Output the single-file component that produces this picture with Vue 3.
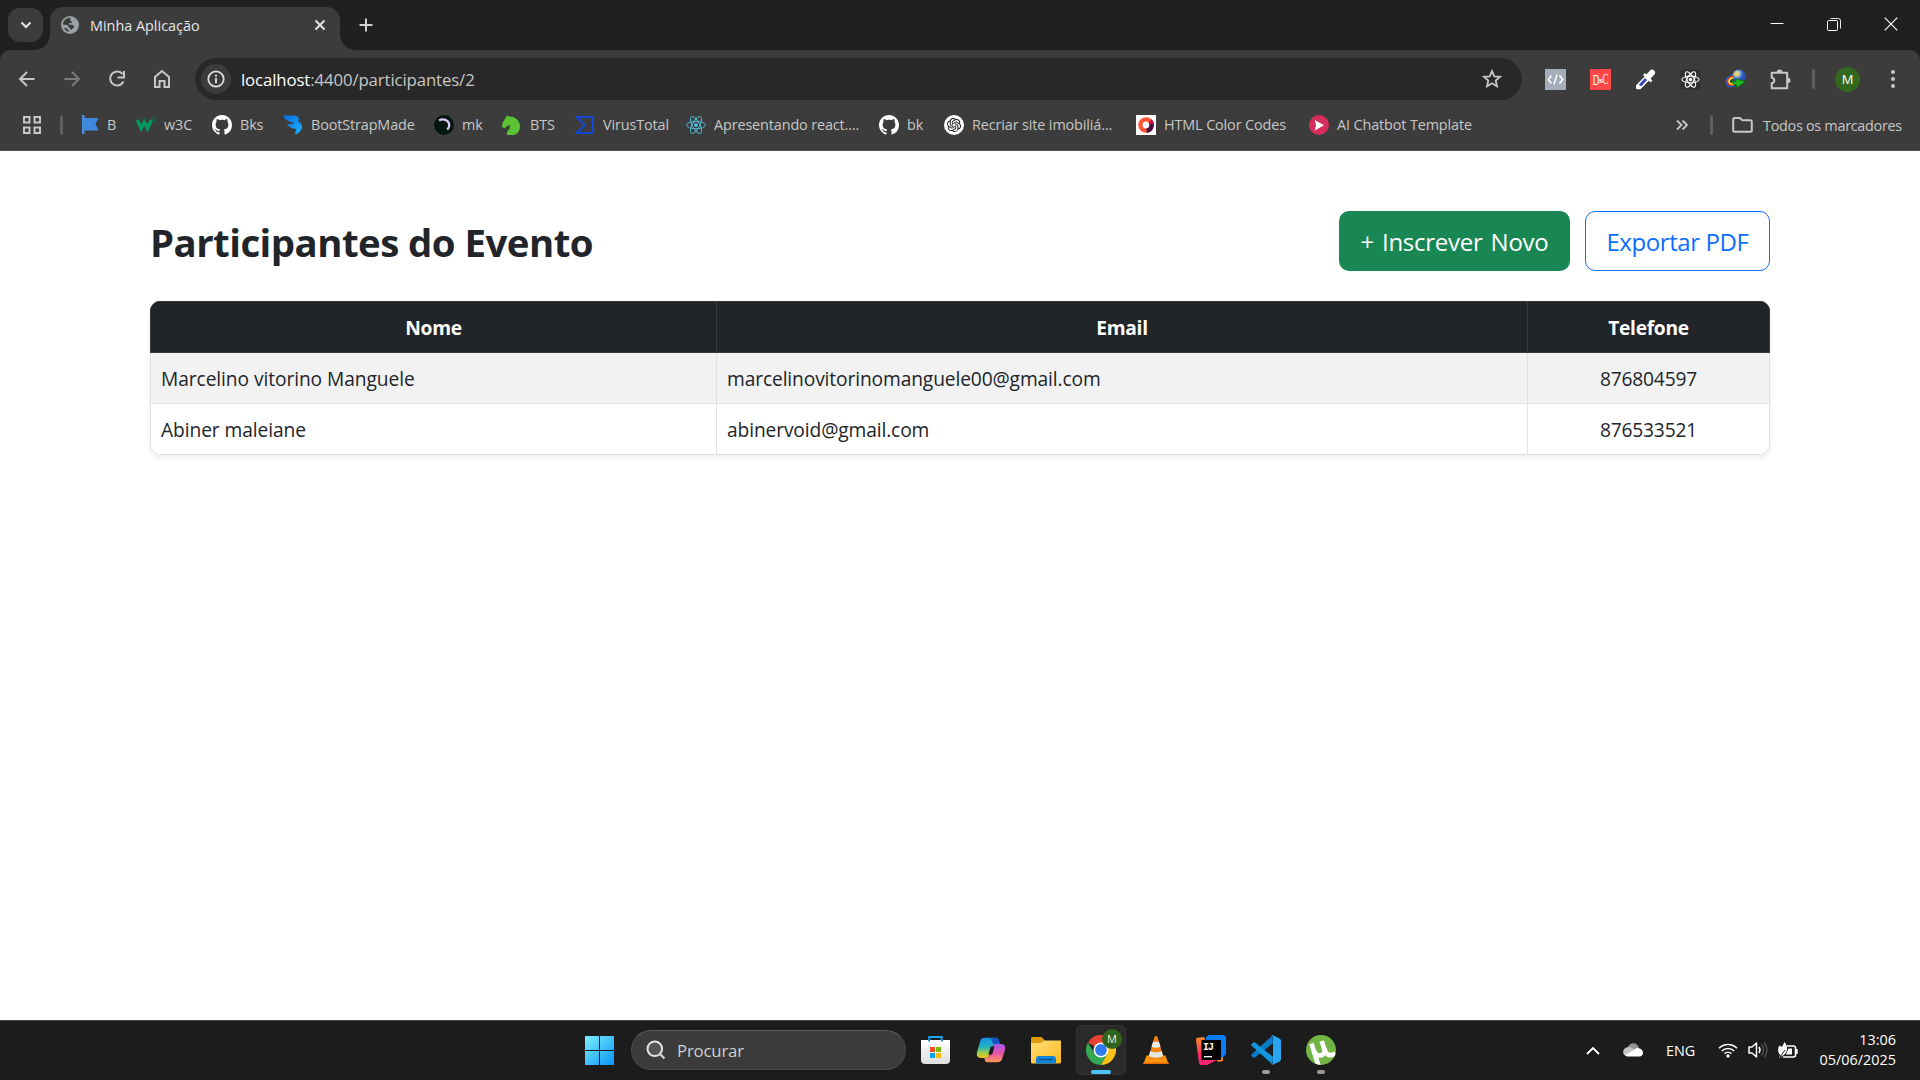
<script setup>
const github = '<svg viewBox="0 0 16 16"><path fill="#fff" d="M8 0C3.58 0 0 3.58 0 8c0 3.54 2.29 6.53 5.47 7.59.4.07.55-.17.55-.38 0-.19-.01-.82-.01-1.49-2.01.37-2.53-.49-2.69-.94-.09-.23-.48-.94-.82-1.13-.28-.15-.68-.52-.01-.53.63-.01 1.08.58 1.23.82.72 1.21 1.87.87 2.33.66.07-.52.28-.87.51-1.07-1.78-.2-3.64-.89-3.64-3.95 0-.87.31-1.59.82-2.15-.08-.2-.36-1.02.08-2.12 0 0 .67-.21 2.2.82.64-.18 1.32-.27 2-.27s1.36.09 2 .27c1.53-1.04 2.2-.82 2.2-.82.44 1.1.16 1.92.08 2.12.51.56.82 1.27.82 2.15 0 3.07-1.87 3.75-3.65 3.95.29.25.54.73.54 1.48 0 1.07-.01 1.93-.01 2.2 0 .21.15.46.55.38A8.01 8.01 0 0 0 16 8c0-4.42-3.58-8-8-8z"/></svg>'

const atom = (color, w) => `<svg viewBox="0 0 20 20" fill="none" stroke="${color}" stroke-width="${w}"><ellipse cx="10" cy="10" rx="9.4" ry="3.7"/><ellipse cx="10" cy="10" rx="9.4" ry="3.7" transform="rotate(60 10 10)"/><ellipse cx="10" cy="10" rx="9.4" ry="3.7" transform="rotate(120 10 10)"/><circle cx="10" cy="10" r="1.9" fill="${color}" stroke="none"/></svg>`

const bookmarks = [
  { label: 'B', slot: 54, icon: '<svg viewBox="0 0 20 20"><path fill="#4a90e2" d="M0 0h2.500v19H0z"/><path fill="#3f8ae0" d="M1 3h15.500l-3 5.500 3 7H1z"/></svg>' },
  { label: 'w3C', slot: 76, icon: '<svg viewBox="0 0 20 20"><path d="M1.300 5l3.900 8.500 3-6.500 3.400 6.500 3.700-8.500" fill="none" stroke="#059862" stroke-width="3.400"/><path d="M16.500 3h2.500l-1.500 2c2 .3 1.800 2.800-.8 2.300" fill="none" stroke="#087347" stroke-width="1.100"/></svg>' },
  { label: 'Bks', slot: 71, icon: github },
  { label: 'BootStrapMade', slot: 151, icon: '<svg viewBox="0 0 20 20"><defs><linearGradient id="bsm" x1="0" y1="0" x2="1" y2="1"><stop offset="0" stop-color="#0b6be0"/><stop offset="1" stop-color="#16b5ff"/></linearGradient></defs><path fill="url(#bsm)" d="M0 .5h10.500c4.500 0 6.500 3 4.700 6.300 3 1.200 4.500 3.700 3.600 6.500-.9 3.200-3.500 5.500-7 6.200l1.500-5.600c-3.500.1-7.500-1.600-9-5.100 3 .9 5.500.4 7-1.600C7 7.500 2 5.500 0 .5z"/></svg>' },
  { label: 'mk', slot: 68, icon: '<svg viewBox="0 0 20 20"><circle cx="10" cy="10" r="10" fill="#04170f"/><path d="M5 5.400c4.500-2.500 10.500 0 10.200 5.200-.1 1.700-.9 3-2 3.900" fill="none" stroke="#d9c7f3" stroke-width="2.300"/></svg>' },
  { label: 'BTS', slot: 73, icon: '<svg viewBox="0 0 20 20"><path fill="#5bc236" d="M4 2.500 4.800 0l1.700 1.600C12 .6 18 5 18 11.500c0 4-2.500 7.500-6 8.500H5c-.5-2.500.5-4.500 2.700-6.200L8 10.300l-3 .7-2.300 2.500L0 12c0-3 1-6 4-9.500z"/></svg>' },
  { label: 'VirusTotal', slot: 111, icon: '<svg viewBox="0 0 20 20"><path d="M1.500 2H18v16H1.500l8.500-8z" fill="none" stroke="#1447d8" stroke-width="2"/></svg>' },
  { label: 'Apresentando react....', slot: 193, icon: atom('#53c1de', 0.9) },
  { label: 'bk', slot: 65, icon: github },
  { label: 'Recriar site imobiliá...', slot: 192, icon: '<svg viewBox="0 0 40 40"><circle cx="20" cy="20" r="20" fill="#fff"/><path transform="translate(6 6) scale(1.17)" fill="#111" d="M22.2819 9.8211a5.9847 5.9847 0 0 0-.5157-4.9108 6.0462 6.0462 0 0 0-6.5098-2.9A6.0651 6.0651 0 0 0 4.9807 4.1818a5.9847 5.9847 0 0 0-3.9977 2.9 6.0462 6.0462 0 0 0 .7427 7.0966 5.98 5.98 0 0 0 .511 4.9107 6.051 6.051 0 0 0 6.5146 2.9001A5.9847 5.9847 0 0 0 13.2599 24a6.0557 6.0557 0 0 0 5.7718-4.2058 5.9894 5.9894 0 0 0 3.9977-2.9001 6.0557 6.0557 0 0 0-.7475-7.0729zm-9.022 12.6081a4.4755 4.4755 0 0 1-2.8764-1.0408l.1419-.0804 4.7783-2.7582a.7948.7948 0 0 0 .3927-.6813v-6.7369l2.02 1.1686a.071.071 0 0 1 .038.052v5.5826a4.504 4.504 0 0 1-4.4945 4.4944zm-9.6607-4.1254a4.4708 4.4708 0 0 1-.5346-3.0137l.142.0852 4.783 2.7582a.7712.7712 0 0 0 .7806 0l5.8428-3.3685v2.3324a.0804.0804 0 0 1-.0332.0615L9.74 19.9502a4.4992 4.4992 0 0 1-6.1408-1.6464zM2.3408 7.8956a4.485 4.485 0 0 1 2.3655-1.9728V11.6a.7664.7664 0 0 0 .3879.6765l5.8144 3.3543-2.0201 1.1685a.0757.0757 0 0 1-.071 0l-4.8303-2.7865A4.504 4.504 0 0 1 2.3408 7.872zm16.5963 3.8558L13.1038 8.364 15.1192 7.2a.0757.0757 0 0 1 .071 0l4.8303 2.7913a4.4944 4.4944 0 0 1-.6765 8.1042v-5.6772a.79.79 0 0 0-.407-.667zm2.0107-3.0231l-.142-.0852-4.7735-2.7818a.7759.7759 0 0 0-.7854 0L9.409 9.2297V6.8974a.0662.0662 0 0 1 .0284-.0615l4.8303-2.7866a4.4992 4.4992 0 0 1 6.6802 4.66zM8.3065 12.863l-2.02-1.1638a.0804.0804 0 0 1-.038-.0567V6.0742a4.4992 4.4992 0 0 1 7.3757-3.4537l-.142.0805L8.704 5.459a.7948.7948 0 0 0-.3927.6813zm1.0976-2.3654l2.602-1.4998 2.6069 1.4998v2.9994l-2.5974 1.4997-2.6067-1.4997Z"/></svg>' },
  { label: 'HTML Color Codes', slot: 173, icon: '<svg viewBox="0 0 20 20"><path fill="#fff" d="M0 0h20v20H0z"/><circle cx="10" cy="10" r="5.600" fill="none" stroke="#ff5533" stroke-width="4.400"/><path d="M14.500 6.600a5.600 5.600 0 0 1-3.900 9" fill="none" stroke="#4b0f45" stroke-width="4.400"/><path d="M14 5.800a5.600 5.600 0 0 1 1.500 3" fill="none" stroke="#c4123c" stroke-width="4.400"/></svg>' },
  { label: 'AI Chatbot Template', slot: 190, icon: '<svg viewBox="0 0 20 20"><circle cx="10" cy="10" r="10" fill="#d62e5c"/><path fill="#fff" d="M5.800 5l9.200 5.200L5.800 15.500l1.200-5.300z"/></svg>' },
]

const extensions = [
  { name: 'code', icon: '<svg viewBox="0 0 21 21"><path fill="#a5adba" d="M0 0h21v21H0z"/><path d="M6.500 6.500 3.300 10.500l3.200 4M14.500 6.500l3.200 4-3.200 4M12 5.500 9 15.500" fill="none" stroke="#fff" stroke-width="1.500"/></svg>' },
  { name: 'dsc', icon: '<svg viewBox="0 0 21 21"><path fill="#ff4747" d="M0 0h21v21H0z"/><g fill="#fff" font-family="Liberation Serif, serif"><text x="2.500" y="15.500" font-size="14" textLength="7" lengthAdjust="spacingAndGlyphs">D</text><text x="9.300" y="13.500" font-size="9" font-weight="700">s</text><text x="12.500" y="14.500" font-size="15" textLength="6" lengthAdjust="spacingAndGlyphs">C</text></g></svg>' },
  { name: 'picker', icon: '<svg viewBox="0 0 21 21"><path d="M11.500 7.500 2.300 16.800 2.300 19h2.500l9-9.200" fill="#fff" stroke="#fff" stroke-width="2.600" stroke-linejoin="round"/><path d="M11 10l-6 6.500" stroke="#3347c4" stroke-width="3"/><path d="M9 5l7.500 7.500" stroke="#fff" stroke-width="2.600"/><path d="M13.500 7.500 17 3.800" stroke="#fff" stroke-width="6" stroke-linecap="round"/></svg>' },
  { name: 'react', icon: '<svg viewBox="0 0 21 21"><path fill="#303030" d="M.5.500h20v20h-20z"/><g transform="translate(.9 .9) scale(.96)" fill="none" stroke="#fff" stroke-width="1.100"><ellipse cx="10" cy="10" rx="9" ry="3.500"/><ellipse cx="10" cy="10" rx="9" ry="3.500" transform="rotate(60 10 10)"/><ellipse cx="10" cy="10" rx="9" ry="3.500" transform="rotate(120 10 10)"/><circle cx="10" cy="10" r="1.300" fill="#fff"/></g></svg>' },
  { name: 'idm', icon: '<svg viewBox="0 0 21 21"><defs><radialGradient id="idm" cx=".35" cy=".3"><stop offset="0" stop-color="#e8f3ff"/><stop offset=".5" stop-color="#6b9ce8"/><stop offset="1" stop-color="#2850b8"/></radialGradient></defs><circle cx="14" cy="7.300" r="6.800" fill="url(#idm)"/><path d="M9 4c2-2.500 5-2.500 6-.5s-1 4-3 4-4-.5-3-3.500z" fill="#e9cf5a" opacity=".8"/><path d="M8 6c-6 1.500-8 5-6.500 8.500C2.500 17.500 6 18 9.500 17" fill="none" stroke="#1c55c8" stroke-width="1.600"/><path d="M8 7c-4.800 1.500-6.500 4-5.300 6.700 1 2.300 3.500 2.800 6.500 2.300" fill="none" stroke="#e83a20" stroke-width="1.700"/><path d="M8 8.600c-3.300 1.200-4.600 3-3.800 4.700.8 1.600 2.600 1.800 4.600 1.400" fill="none" stroke="#ffe02e" stroke-width="1.800"/><path d="M6.800 11.500c1.500 1.300 2.500 1 4 .3l-.5-2.300 10.200 3-8.800 6.500-.4-3.200c-2.300.3-4.300-1-4.500-4.300z" fill="#20b51c" stroke="#085b0a" stroke-width=".7"/></svg>' },
  { name: 'puzzle', icon: '<svg viewBox="0 0 21 21"><path d="M2 3.500h15.500V19H2v-5c3.500-.5 3.500-5 0-5.500z" transform="translate(-.3 .3)" fill="none" stroke="#c7c7c7" stroke-width="2" stroke-linejoin="round"/><path d="M6.800 3.200a2.800 2.800 0 0 1 5.600 0zM17.800 8.700a2.700 2.700 0 0 1 0 5.400z" fill="#c7c7c7"/></svg>' },
]

const apps = [
  { name: 'store', icon: '<svg viewBox="0 0 30 30"><defs><linearGradient id="bag" x2="0" y2="1"><stop stop-color="#fff"/><stop offset="1" stop-color="#dedede"/></linearGradient></defs><path d="M8.300 7V2h12.400v5" fill="none" stroke="#22a8ee" stroke-width="2.200"/><path d="M0 5h29v20a4 4 0 0 1-4 4H4a4 4 0 0 1-4-4z" fill="url(#bag)"/><path d="M7.200 6.500V2H9v4.500M20 6.500V2h1.800v4.500" fill="#1186c8"/><path fill="#f25022" d="M9 12h5v5H9z"/><path fill="#7fba00" d="M15 12h5v5h-5z"/><path fill="#00a4ef" d="M9 18h5v5H9z"/><path fill="#ffb900" d="M15 18h5v5h-5z"/></svg>' },
  { name: 'copilot', icon: '<svg viewBox="0 0 30 30"><defs><linearGradient id="cpa" x2="0" y2="1"><stop stop-color="#1690e8"/><stop offset=".45" stop-color="#22b3c0"/><stop offset=".75" stop-color="#a4cc48"/><stop offset="1" stop-color="#f2c51f"/></linearGradient><linearGradient id="cpb" x2="0" y2="1"><stop stop-color="#a758ed"/><stop offset=".5" stop-color="#e552a8"/><stop offset="1" stop-color="#ff9b55"/></linearGradient></defs><path d="M8.500 2.800h11c2 0 2.800 1 3.300 2.700l1 3.500h-4c-2 0-3.200 1-3.800 3l-2.500 8c-.6 1.900-1.800 3-3.700 3H5c-4 0-4.800-3-3.800-6.500l2.900-10C4.800 4 6 2.800 8.500 2.800z" fill="url(#cpa)"/><path d="M14 2.800h5.500c2 0 2.800 1 3.300 2.700l1 3.500h-4c-2 0-3-.5-3.600-2.500-.5-2-1-3.200-2.200-3.700z" fill="#1556c7"/><path d="M21.500 27.200H12c-2.500 0-3.800-1.500-3.300-4.200 2.800 0 4.400-.7 5.100-3l2.500-8c.6-2 1.700-3 3.700-3h5c4 0 4.800 3 3.800 6.500l-2.900 9c-.8 2-2 2.700-4.400 2.700z" fill="url(#cpb)"/><path d="M14.800 11.500h3.700l-2.400 8h-3.800z" fill="#1c1c1c"/></svg>' },
  { name: 'explorer', icon: '<svg viewBox="0 0 30 30"><defs><linearGradient id="fld" x2="1" y2="1"><stop stop-color="#ffe07a"/><stop offset="1" stop-color="#fbb91a"/></linearGradient></defs><path d="M0 3.500A1.500 1.500 0 0 1 1.500 2h9l3 3v5H0z" fill="#dc9a0c"/><path d="M0 8h10l3-2.500h17v21.500a1.500 1.500 0 0 1-1.500 1.500h-27A1.500 1.500 0 0 1 0 27z" fill="url(#fld)"/><path d="M5 28.500V24a3 3 0 0 1 3-3h14a3 3 0 0 1 3 3v4.500z" fill="#1383d8"/><path d="M8.500 24.500h13" stroke="#0b4f8c" stroke-width="1.300"/></svg>' },
  { name: 'chrome', state: 'active', icon: '<svg viewBox="0 0 30 30"><path fill="#ea4335" d="M15 15 2 7.500A15 15 0 0 1 28 7.500H15z"/><path fill="#34a853" d="M15 15 8.500 18.800 2 7.500A15 15 0 0 0 15 30l6.500-11.200z"/><path fill="#fbc116" d="M15 7.500h13A15 15 0 0 1 15 30l6.500-11.200z"/><circle cx="15" cy="15" r="7.500" fill="#fff"/><circle cx="15" cy="15" r="5.900" fill="#2f7bed"/></svg>' },
  { name: 'vlc', icon: '<svg viewBox="0 0 30 30"><path d="M5.500 20.500h19l3 8.500h-25z" fill="#ff9410"/><path d="M2.500 27.500h25l.5 1.500H2z" fill="#e86a00"/><path d="M13.500 2c.5-1.300 2.500-1.300 3 0l6 20.500c-3 2.300-12 2.300-15 0z" fill="#f58412"/><path d="M12.200 6.500c1.500.8 4.100.8 5.600 0l1.700 5.200c-2.500 1.500-6.500 1.500-9 0z" fill="#eeeeec"/><path d="M9.300 16c3 1.700 8.400 1.700 11.400 0l1.500 5c-3.500 2.300-10.900 2.300-14.400 0z" fill="#e5e5e3"/></svg>' },
  { name: 'idea', icon: '<svg viewBox="0 0 30 30"><defs><linearGradient id="ij" x2="0" y2="1"><stop stop-color="#ff8b28"/><stop offset=".6" stop-color="#fe315d"/><stop offset="1" stop-color="#ff2178"/></linearGradient></defs><path d="M15 16h12v10l-5 1z" fill="#ff861b"/><path d="M0 5 .5 3 8 2l6 14 7 9-10 5H4.500L3 28z" fill="url(#ij)"/><path d="M10 2l3-2h14a3 3 0 0 1 3 3v16l-4 4H10z" fill="#087cfa"/><path d="M5.500 5h19.500v20H5.500z" fill="#000"/><text x="7" y="15" fill="#fff" font-family="Liberation Mono, monospace" font-weight="700" font-size="10" textLength="11">IJ</text><path d="M8 21h8v1.300H8z" fill="#fff"/></svg>' },
  { name: 'vscode', state: 'running', icon: '<svg viewBox="0 0 30 30"><path d="M22 8.200 4 22.500c-.5.400-1.200.4-1.700 0L.6 21a1.200 1.200 0 0 1 0-1.800L21.500.5z" fill="#0879c6"/><path d="M22 21.800 4 7.500c-.5-.4-1.200-.4-1.700 0L.6 9a1.200 1.200 0 0 0 0 1.800L21.500 29.500z" fill="#1096df"/><path d="M21.800.3 28.600 3.500A2.500 2.500 0 0 1 30 5.700v18.600a2.500 2.500 0 0 1-1.400 2.200l-6.800 3.200c-1 .4-1.800 0-2.300-.5 1 .8 2.500.2 2.500-1.200V2c0-1.400-1.500-2-2.500-1.200.5-.6 1.300-1 2.300-.5z" fill="#2aa5f2"/></svg>' },
  { name: 'utorrent', state: 'running', icon: '<svg viewBox="0 0 30 30"><defs><clipPath id="utc"><circle cx="15" cy="15" r="15"/></clipPath></defs><circle cx="15" cy="15" r="15" fill="#72b544"/><g clip-path="url(#utc)" fill="none" stroke="#fff" stroke-width="4.600"><path d="M5.500 8.500 12.500 31"/><path d="M8 15.500c1.500 6.500 9.800 6.500 10.800.5L15.700 6"/><path d="M18.300 13c1.200 6.500 4.500 9 11 5.500"/></g></svg>' },
]

const participants = [
  { nome: 'Marcelino vitorino Manguele', email: 'marcelinovitorinomanguele00@gmail.com', telefone: '876804597' },
  { nome: 'Abiner maleiane', email: 'abinervoid@gmail.com', telefone: '876533521' },
]
</script>

<template>
  <div class="screen">
    <header class="tabstrip">
      <button class="tab-search"><svg viewBox="0 0 12 12" width="12" height="12"><path d="M1.500 3.500 6 8l4.500-4.500" fill="none" stroke="#e6e6e6" stroke-width="2" /></svg></button>
      <div class="tab">
        <svg class="globe" viewBox="0 0 18 18" width="18" height="18"><circle cx="9" cy="9" r="9" fill="#9aa0a6" /><path d="M8.500 1.800C5 2 2.200 5 2 8.200c1.500 1.300 3.200.6 4.500 1 1.700.6.500 2.500 2 2.800 1.400.2.400 1.800 1.200 2.100 1 .2 1.300-1.600 2.500-2 2-.7.500-2.800-.8-3-1.700-.3-2.800.1-4-1 .8-1.800 2.500-.4 3.500-1.400 1-1.200-1.800-1.300-1.500-3 .1-.7.300-1.300-.9-1.900zM3 12c1 2.200 3 3.800 5.500 4-.5-1.500-1.500-1.500-2-2.800C6 12 4.500 12 3 12z" fill="#3c3c3c" /></svg>
        <span class="tab-title">Minha Aplicação</span>
        <svg class="tab-close" viewBox="0 0 12 12" width="12" height="12"><path d="M1.500 1.500l9 9M10.500 1.500l-9 9" stroke="#e3e3e3" stroke-width="2" /></svg>
      </div>
      <svg class="new-tab" viewBox="0 0 14 14" width="14" height="14"><path d="M7 .5v13M.5 7h13" stroke="#d0d0d0" stroke-width="2" /></svg>
      <div class="window-controls">
        <svg viewBox="0 0 14 14"><path d="M.5 6.500h13" stroke="#fff" /></svg>
        <svg viewBox="0 0 14 14"><path d="M3.500 1.500h8q2 0 2 2v8" fill="none" stroke="#e8e8e8" /><rect x=".5" y="3.500" width="10" height="10" rx="1" fill="none" stroke="#fff" /></svg>
        <svg viewBox="0 0 14 14"><path d="M.7.700l12.600 12.600M13.300.700.700 13.300" stroke="#fff" stroke-width="1.200" /></svg>
      </div>
    </header>

    <section class="toolbar">
      <div class="nav-row">
        <span class="nav"><svg viewBox="0 0 20 20"><path d="M17.500 10H3.500M10 3l-7 7 7 7" fill="none" stroke="#c7c7c7" stroke-width="2" /></svg></span>
        <span class="nav"><svg viewBox="0 0 20 20"><path d="M2.500 10h14M10 3l7 7-7 7" fill="none" stroke="#7b7b7b" stroke-width="2" /></svg></span>
        <span class="nav"><svg viewBox="0 0 20 20"><path d="M15.600 5A7 7 0 1 0 16.500 12.500M17 2v6.500h-6.500" fill="none" stroke="#c7c7c7" stroke-width="2" /></svg></span>
        <span class="nav"><svg viewBox="0 0 20 20"><path d="M3 18V8l7-6 7 6v10h-4.500v-6h-5v6z" fill="none" stroke="#c7c7c7" stroke-width="2" /></svg></span>
        <div class="omnibox">
          <span class="site-info"><svg viewBox="0 0 18 18" width="18" height="18"><circle cx="9" cy="9" r="7.700" fill="none" stroke="#dedede" stroke-width="1.800" /><path d="M9 8v5.200M9 4.800v1.900" stroke="#dedede" stroke-width="1.900" /></svg></span>
          <span class="url"><b>localhost</b>:4400/participantes/2</span>
          <svg class="star" viewBox="0 0 20 20" width="20" height="20"><path d="M10 2l2.300 5.300 5.800.5-4.400 3.800 1.300 5.700L10 14.200 5 17.300l1.300-5.700L1.900 7.800l5.800-.5z" fill="none" stroke="#c7c7c7" stroke-width="1.800" /></svg>
        </div>
        <div class="extensions">
          <span v-for="e in extensions" :key="e.name" class="extension" v-html="e.icon"></span>
        </div>
        <i class="divider"></i>
        <span class="avatar">M</span>
        <svg class="menu" viewBox="0 0 4 18" width="4" height="18" fill="#c7c7c7"><circle cx="2" cy="2" r="2" /><circle cx="2" cy="9" r="2" /><circle cx="2" cy="16" r="2" /></svg>
      </div>

      <div class="bookmark-row">
        <svg class="apps-icon" viewBox="0 0 18 18" width="18" height="18"><path d="M1 1h5.500v5.500H1zM11.500 1H17v5.500h-5.500zM1 11.500h5.500V17H1zM11.500 11.500H17V17h-5.500z" fill="none" stroke="#c7c7c7" stroke-width="2" /></svg>
        <i class="divider"></i>
        <div class="bookmarks">
          <span v-for="b in bookmarks" :key="b.label" class="bookmark" :style="{ width: b.slot + 'px' }">
            <span class="favicon" v-html="b.icon"></span>{{ b.label }}
          </span>
        </div>
        <svg class="overflow" viewBox="0 0 12 12" width="12" height="12"><path d="M1 1.500 5.500 6 1 10.500M6.500 1.500 11 6l-4.500 4.500" fill="none" stroke="#c7c7c7" stroke-width="1.800" /></svg>
        <i class="divider"></i>
        <svg class="folder" viewBox="0 0 21 16" width="21" height="16"><path d="M1.200 2.500q0-1.500 1.500-1.500H8l2.300 2.300h8q1.500 0 1.500 1.500v8.500q0 1.500-1.500 1.500H2.700q-1.500 0-1.500-1.500z" fill="none" stroke="#c7c7c7" stroke-width="2" /></svg>
        <span class="all-bookmarks">Todos os marcadores</span>
      </div>
    </section>

    <main class="page">
      <div class="page-head">
        <h2>Participantes do Evento</h2>
        <div class="actions">
          <button class="btn btn-success">+ Inscrever Novo</button>
          <button class="btn btn-outline">Exportar PDF</button>
        </div>
      </div>
      <div class="table">
        <div class="row head">
          <span>Nome</span><span>Email</span><span>Telefone</span>
        </div>
        <div v-for="p in participants" :key="p.email" class="row">
          <span>{{ p.nome }}</span><span class="email">{{ p.email }}</span><span class="phone">{{ p.telefone }}</span>
        </div>
      </div>
    </main>

    <footer class="taskbar">
      <div class="launcher">
        <span class="app start"><svg viewBox="0 0 29 29" width="29" height="29"><defs><linearGradient id="win" gradientUnits="userSpaceOnUse" x1="0" y1="0" x2="29" y2="29"><stop stop-color="#7defff" /><stop offset="1" stop-color="#0893f5" /></linearGradient></defs><path fill="url(#win)" d="M0 0h14v14H0zM15 0h14v14H15zM0 15h14v14H0zM15 15h14v14H15z" /></svg></span>
        <div class="search">
          <svg viewBox="0 0 20 20" width="20" height="20"><circle cx="8.800" cy="8.800" r="7.300" fill="#555" stroke="#e4e4e4" stroke-width="2" /><path d="M14 14l4.500 4.500" stroke="#d0d0d0" stroke-width="2.400" /></svg>
          Procurar
        </div>
        <span v-for="a in apps" :key="a.name" class="app" :class="a.state">
          <span class="app-icon" v-html="a.icon"></span>
          <b v-if="a.name === 'chrome'" class="profile-badge">M</b>
        </span>
      </div>
      <div class="tray">
        <svg class="tray-up" viewBox="0 0 14 9" width="14" height="9"><path d="M1 8l6-6 6 6" fill="none" stroke="#fff" stroke-width="1.900" /></svg>
        <svg class="cloud" viewBox="0 0 20 14" width="20" height="14"><path d="M4.500 5C6-1 14.500-1.500 16 5l-6 3z" fill="#919191" /><path d="M4.500 4.200C7 3.500 9 5 14 8L3 13C-1.500 11-.5 4.800 4.500 4.200z" fill="#c4c4c4" /><path d="M2 12l9-5c1.500-1.500 3.500-2.300 5-1.700 5.500 1 5 8.200.5 8.200H4z" fill="#fff" /></svg>
        <span class="lang">ENG</span>
        <svg class="wifi" viewBox="0 0 20 16" width="20" height="16" fill="none" stroke="#fff" stroke-width="1.500"><path d="M1 6.200a12.700 12.700 0 0 1 18 0M3.800 9a8.800 8.800 0 0 1 12.400 0M6.600 11.600a4.900 4.900 0 0 1 6.800 0" /><circle cx="10" cy="14" r="1.300" fill="#fff" stroke-width=".8" /></svg>
        <svg class="volume" viewBox="0 0 20 18" width="20" height="18" fill="none" stroke="#fff" stroke-width="1.500"><path d="M1 6h3l4.500-4v14L4 12H1z" stroke-linejoin="round" /><path d="M11 6q2 3 0 6" /><path d="M13.500 3.500q4 5.500 0 11M16.200 1.500q5.500 7.500 0 15" stroke="#505050" /></svg>
        <svg class="battery" viewBox="0 0 20 17" width="20" height="17"><path d="M9 4h6.500q2 0 2 2v7q0 2-2 2H5" fill="none" stroke="#fff" stroke-width="1.600" /><path d="M18 7.500h1.200v4H18z" fill="#fff" stroke="#fff" /><path d="M10.500 6.500h3.500v6H8z" fill="#fff" /><path d="M6.500 0c3 3.500 4 8.500 0 12.500L1 16l1.500-3C-.5 11-.5 6 1.500 3.500L4 5z" fill="#fff" /><path d="M2 15l5-7" stroke="#1c1c1c" /></svg>
        <div class="clock"><span>13:06</span><span>05/06/2025</span></div>
      </div>
    </footer>
  </div>
</template>

<style>
body { margin: 0; background: #fff; }
svg { display: block; }
</style>

<style scoped>
.screen { width: 1920px; height: 1080px; display: flex; flex-direction: column; overflow: hidden; font-family: "Open Sans", "Noto Sans", sans-serif; }
.screen * { box-sizing: border-box; }
button { font-family: inherit; border: 0; padding: 0; cursor: pointer; }

.tabstrip { height: 50px; flex: none; background: #1f2120; display: flex; align-items: flex-start; }
.tab-search { width: 35px; height: 34px; margin: 8px 7px 0 8px; border-radius: 12px; background: #3c3c3c; display: flex; align-items: center; justify-content: center; }
.tab { position: relative; width: 290px; height: 43px; margin-top: 7px; padding: 0 15px 7px 11px; border-radius: 13px 13px 0 0; background: #3c3c3c; display: flex; align-items: center; }
.tab::before, .tab::after { content: ""; position: absolute; bottom: 0; width: 15px; height: 15px; }
.tab::before { left: -15px; background: radial-gradient(circle at 0 0, transparent 14.500px, #3c3c3c 15px); }
.tab::after { right: -15px; background: radial-gradient(circle at 100% 0, transparent 14.500px, #3c3c3c 15px); }
.tab-title { margin-left: 11px; padding-top: 1px; flex: 1; font-size: 14.400px; line-height: 20px; color: #e6e6e6; white-space: nowrap; }
.tab-close { flex: none; margin-right: -1px; }
.new-tab { margin: 18px 0 0 19px; }
.window-controls { margin: 17px 22px 0 auto; display: flex; gap: 43px; }
.window-controls svg { width: 14px; height: 14px; }

.toolbar { height: 101px; flex: none; border-bottom: 1px solid #4d4d4d; background: #3c3c3c; border-radius: 10px 10px 0 0; position: relative; }
.screen::before { content: ""; position: absolute; top: 50px; left: 0; width: 1920px; height: 12px; background: #1f2120; }
.nav-row { height: 58px; padding-left: 4px; display: flex; align-items: center; }
.nav { width: 45px; display: flex; justify-content: center; }
.nav svg { width: 20px; height: 20px; }
.omnibox { width: 1327px; height: 42px; margin-left: 11px; padding: 0 20px 0 6px; border-radius: 21px; background: #282828; display: flex; align-items: center; }
.site-info { width: 30px; height: 30px; border-radius: 50%; background: #3c3c3c; display: flex; align-items: center; justify-content: center; }
.url { flex: 1; margin-left: 10px; font-size: 16.800px; letter-spacing: -.12px; color: #c7c7c7; }
.url b { font-weight: 400; color: #fff; }
.extensions { display: flex; gap: 24px; margin-left: 23px; }
.extension { width: 21px; height: 21px; }
.extension :deep(svg) { width: 21px; height: 21px; }
.divider { width: 3px; height: 20px; border-radius: 2px; background: #5f5f5f; flex: none; }
.nav-row .divider { margin-left: 21px; }
.avatar { width: 25px; height: 25px; margin-left: 20px; border-radius: 50%; background: #33691e; color: #fff; font-size: 13px; line-height: 25px; text-align: center; }
.menu { margin-left: 31px; }
.bookmark-row { height: 34px; padding-left: 23px; display: flex; align-items: center; font-size: 14.400px; color: #c7c7c7; white-space: nowrap; }
.apps-icon { margin-right: 19px; }
.bookmarks { width: 1593px; margin-left: 19px; display: flex; }
.bookmark { display: flex; align-items: center; flex: none; line-height: 20px; letter-spacing: -.12px; }
.bookmark:first-child { letter-spacing: -.12px; }
.favicon { width: 20px; height: 20px; margin-right: 8px; flex: none; }
.bookmark:first-child .favicon { margin-right: 5px; }
.favicon :deep(svg) { width: 20px; height: 20px; }
.overflow { margin: 0 22px 0 1px; }
.folder { margin: 0 10px 0 19px; }
.all-bookmarks { letter-spacing: -.28px; }

.page { flex: 1; padding: 60px 150px 0; background: #fff; color: #212529; }
.page-head { height: 60px; display: flex; align-items: center; justify-content: space-between; }
h2 { margin: 2px 0 0; font-size: 38.400px; line-height: 48px; font-weight: 700; letter-spacing: -.54px; white-space: nowrap; }
.actions { display: flex; gap: 15px; }
.btn { height: 60px; border-radius: 10px; font-size: 24px; white-space: nowrap; }
.btn-success { width: 231px; background: #198754; color: #fff; letter-spacing: -.25px; word-spacing: 2px; }
.btn-outline { width: 185px; border: 1px solid #0d6efd; background: #fff; color: #0d6efd; letter-spacing: -.4px; }
.table { margin-top: 30px; border-radius: 10px; overflow: hidden; box-shadow: 0 2.500px 5px rgba(0, 0, 0, .075); font-size: 19.200px; line-height: 30px; letter-spacing: -.08px; }
.row { height: 51px; display: grid; grid-template-columns: 567px 811px 242px; background: #fff; }
.row span { padding: 11px 10px 0; border-right: 1px solid #dee2e6; border-bottom: 1px solid #dee2e6; white-space: nowrap; }
.row span:first-child { border-left: 1px solid #dee2e6; }
.row:nth-child(2) { background: #f2f2f2; }
.row .email { letter-spacing: -.12px; }
.row .phone { text-align: center; letter-spacing: -.2px; }
.row.head { height: 52px; background: #212529; color: #fff; font-weight: 700; text-align: center; letter-spacing: -.3px; }
.row.head span { border-color: #373b3e; border-top: 1px solid #373b3e; }
.row:last-child span:first-child { border-bottom-left-radius: 10px; }
.row:last-child span:last-child { border-bottom-right-radius: 10px; }

.taskbar { height: 60px; flex: none; padding: 0 0 1px 574px; border-top: 1px solid #454545; background: #1c1c1c; display: flex; align-items: center; }
.launcher { display: flex; align-items: center; gap: 5px; }
.app { position: relative; width: 50px; height: 50px; border-radius: 5px; display: flex; align-items: center; justify-content: center; }
.start { padding: 1px 0 0 1px; }
.app-icon { width: 30px; height: 30px; }
.app-icon :deep(svg) { width: 30px; height: 30px; }
.active { background: #2a2a2a; border: 1px solid #343434; }
.active::after, .running::after { content: ""; position: absolute; bottom: 1px; left: 50%; height: 4px; border-radius: 2px; transform: translateX(-50%); }
.active::after { width: 20px; background: #4cc2ff; bottom: 0; }
.running::after { width: 8px; background: #9a9a9a; }
.profile-badge { position: absolute; top: 3px; right: 3px; width: 20px; height: 20px; border-radius: 50%; background: #2f641c; color: #e6eee2; font-size: 11px; font-weight: 400; line-height: 20px; text-align: center; }
.search { width: 275px; height: 40px; margin: 0 0 0 2px; padding-left: 14px; border-radius: 20px; border: 1px solid #4a4a4a; border-top-color: #5c5c5c; background: #3b3b3b; color: #cfcfcf; font-size: 16.800px; letter-spacing: -.2px; display: flex; align-items: center; gap: 11px; }
.tray { flex: 1; display: flex; align-items: center; color: #fff; font-size: 14.400px; }
.tray-up { margin-left: 240px; }
.cloud { margin-left: 23px; }
.lang { width: 31px; margin: 0 21px 0 23px; }
.volume { margin-left: 10px; }
.battery { margin-left: 10px; }
.clock { margin: -1px 24px 0 auto; display: flex; flex-direction: column; align-items: flex-end; line-height: 20px; }
</style>
